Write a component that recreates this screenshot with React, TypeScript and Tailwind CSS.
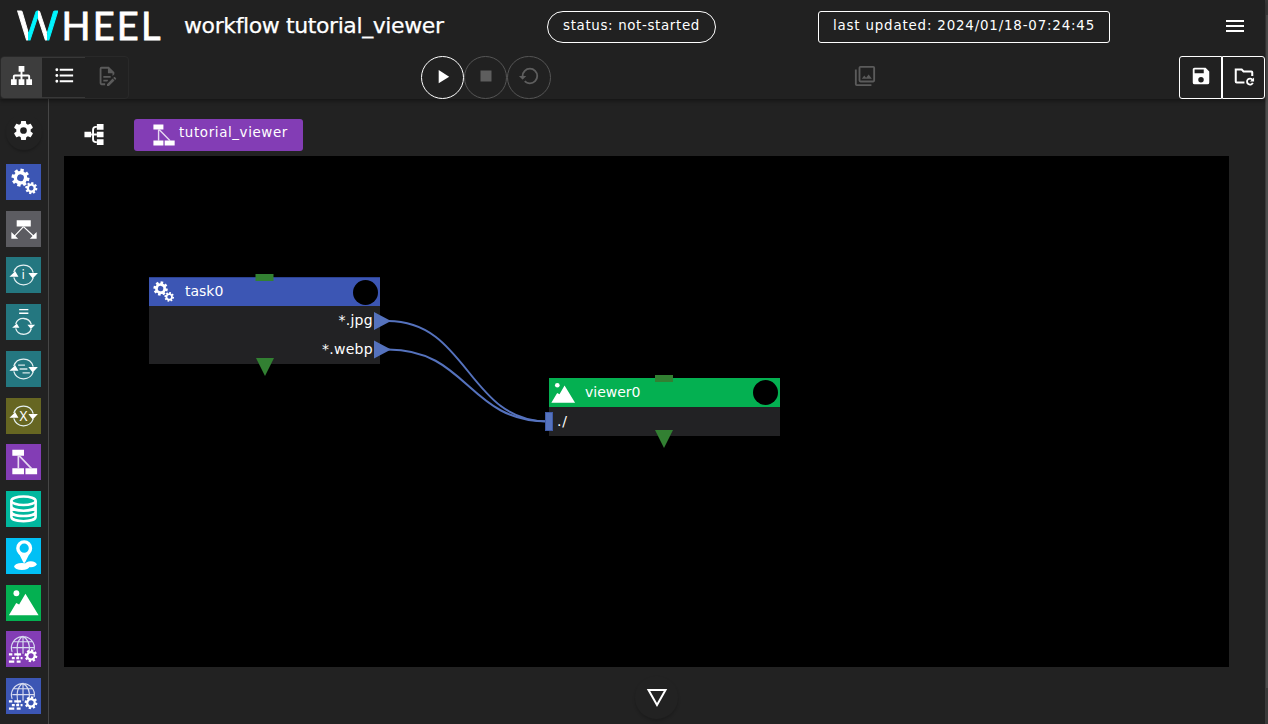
import React from "react";

const paths = {
  sitemap: "M9,2V8H11V11H5C3.89,11 3,11.89 3,13V16H1V22H7V16H5V13H11V16H9V22H15V16H13V13H19V16H17V22H23V16H21V13C21,11.89 20.11,11 19,11H13V8H15V2H9Z",
  list: "M7,5H21V7H7V5M7,13V11H21V13H7M4,4.5A1.5,1.5 0 0,1 5.5,6A1.5,1.5 0 0,1 4,7.5A1.5,1.5 0 0,1 2.5,6A1.5,1.5 0 0,1 4,4.5M4,10.5A1.5,1.5 0 0,1 5.5,12A1.5,1.5 0 0,1 4,13.5A1.5,1.5 0 0,1 2.5,12A1.5,1.5 0 0,1 4,10.5M7,19V17H21V19H7M4,16.5A1.5,1.5 0 0,1 5.5,18A1.5,1.5 0 0,1 4,19.5A1.5,1.5 0 0,1 2.5,18A1.5,1.5 0 0,1 4,16.5Z",
  edit: "M8,12H16V14H8V12M10,20H6V4H13V9H18V12.1L20,10.1V8L14,2H6A2,2 0 0,0 4,4V20A2,2 0 0,0 6,22H10V20M8,18H12.1L13,17.1V16H8V18M20.2,13C20.3,13 20.5,13.1 20.6,13.2L21.9,14.5C22.1,14.7 22.1,15.1 21.9,15.3L20.9,16.3L18.8,14.2L19.8,13.2C19.9,13.1 20,13 20.2,13M20.2,16.9L14.1,23H12V20.9L18.1,14.8L20.2,16.9Z",
  play: "M8,5.14V19.14L19,12.14L8,5.14Z",
  stop: "M18,18H6V6H18V18Z",
  restore: "M13,3A9,9 0 0,0 4,12H1L4.89,15.89L4.96,16.03L9,12H6A7,7 0 0,1 13,5A7,7 0 0,1 20,12A7,7 0 0,1 13,19C11.07,19 9.32,18.21 8.06,16.94L6.64,18.36C8.27,20 10.5,21 13,21A9,9 0 0,0 22,12A9,9 0 0,0 13,3Z",
  images: "M21,17H7V3H21M21,1H7A2,2 0 0,0 5,3V17A2,2 0 0,0 7,19H21A2,2 0 0,0 23,17V3A2,2 0 0,0 21,1M3,5H1V21A2,2 0 0,0 3,23H19V21H3M15.96,10.29L13.21,13.83L11.25,11.47L8.5,15H19.5L15.96,10.29Z",
  menu: "M3,6H21V8H3V6M3,11H21V13H3V11M3,16H21V18H3V16Z",
  save: "M15,9H5V5H15M12,19A3,3 0 0,1 9,16A3,3 0 0,1 12,13A3,3 0 0,1 15,16A3,3 0 0,1 12,19M17,3H5C3.89,3 3,3.9 3,5V19A2,2 0 0,0 5,21H19A2,2 0 0,0 21,19V7L17,3Z",
  cog: "M12,15.5A3.5,3.5 0 0,1 8.5,12A3.5,3.5 0 0,1 12,8.5A3.5,3.5 0 0,1 15.5,12A3.5,3.5 0 0,1 12,15.5M19.43,12.97C19.47,12.65 19.5,12.33 19.5,12C19.5,11.67 19.47,11.34 19.43,11L21.54,9.37C21.73,9.22 21.78,8.95 21.66,8.73L19.66,5.27C19.54,5.05 19.27,4.96 19.05,5.05L16.56,6.05C16.04,5.66 15.5,5.32 14.87,5.07L14.5,2.42C14.46,2.18 14.25,2 14,2H10C9.75,2 9.54,2.18 9.5,2.42L9.13,5.07C8.5,5.32 7.96,5.66 7.44,6.05L4.95,5.05C4.73,4.96 4.46,5.05 4.34,5.27L2.34,8.73C2.21,8.95 2.27,9.22 2.46,9.37L4.57,11C4.53,11.34 4.5,11.67 4.5,12C4.5,12.33 4.53,12.65 4.57,12.97L2.46,14.63C2.27,14.78 2.21,15.05 2.34,15.27L4.34,18.73C4.46,18.95 4.73,19.03 4.95,18.95L7.44,17.94C7.96,18.34 8.5,18.68 9.13,18.93L9.5,21.58C9.54,21.82 9.75,22 10,22H14C14.25,22 14.46,21.82 14.5,21.58L14.87,18.93C15.5,18.67 16.04,18.34 16.56,17.94L19.05,18.95C19.27,19.03 19.54,18.95 19.66,18.73L21.66,15.27C21.78,15.05 21.73,14.78 21.54,14.63L19.43,12.97Z",
};

function Icon({ name, className = "size-6" }: { name: keyof typeof paths; className?: string }) {
  return (
    <svg viewBox="0 0 24 24" className={className} fill="currentColor">
      <path d={paths[name]} />
    </svg>
  );
}

function FolderRefresh() {
  return (
    <svg viewBox="0 0 24 24" className="size-[22px]" fill="none" stroke="currentColor" strokeWidth="2.200">
      <path d="M12.500 19H4a1 1 0 0 1-1-1V5h6.500l2 2H20a1 1 0 0 1 1 1v4" />
      <path d="M21.300 16.200A3.300 3.300 0 1 0 21.600 19.500" strokeWidth="2" />
      <path d="M23 13.500V18h-4.500z" fill="currentColor" stroke="none" />
    </svg>
  );
}

function Gear({ cx, cy, r, hole }: { cx: number; cy: number; r: number; hole: number }) {
  const inner = r * 0.76;
  return (
    <g transform={`translate(${cx} ${cy}) rotate(12)`}>
      <circle r={(inner + hole) / 2} fill="none" stroke="#fff" strokeWidth={inner - hole} />
      {[0, 45, 90, 135, 180, 225, 270, 315].map((a) => (
        <rect key={a} x={-r * 0.19} y={-r} width={r * 0.38} height={r * 0.36} fill="#fff" transform={`rotate(${a})`} />
      ))}
    </g>
  );
}

function Cycle({ cy = 18, r = 10.3 }: { cy?: number; r?: number }) {
  const k = r / 10.3;
  return (
    <g transform={`translate(18 ${cy}) scale(${k})`} stroke="#e4f0f1" strokeWidth={1.3 / k} fill="none">
      <path d="M-10 -3A10.500 10.500 0 0 1 10 -2.500" />
      <path d="M10 3A10.500 10.500 0 0 1 -10 2.500" />
      <path d="M-14.500 1.800h9.300L-8.500 -3.800zM14.800 -2h-9.800L9.500 3.500z" fill="#fff" stroke="none" />
    </g>
  );
}

type Kind = "task" | "ps" | "for" | "while" | "foreach" | "if" | "workflow" | "storage" | "source" | "viewer" | "remote";

function Glyph({ kind, className }: { kind: Kind; className: string }) {
  return (
    <svg viewBox="0 0 36 36" className={className}>
      {kind === "task" && (
        <>
          <Gear cx={14.9} cy={13.6} r={9.2} hole={3.5} />
          <Gear cx={26} cy={24.3} r={6.2} hole={2.4} />
        </>
      )}
      {kind === "ps" && (
        <g fill="#fff">
          <path d="M11 9h14.500v6.500H11zM5.500 28v-7l7 7zM31.500 28v-7l-7 7z" />
          <path d="M18 15.500 8 26M18 15.500 29 26" stroke="#fff" strokeWidth="1.200" />
        </g>
      )}
      {kind === "for" && (
        <>
          <Cycle />
          <text x="17.800" y="22.500" textAnchor="middle" fontSize="12.500" fill="#fff" fontFamily="DejaVu Sans, sans-serif">i</text>
        </>
      )}
      {kind === "while" && (
        <>
          <Cycle cy={22.5} r={8.3} />
          <path d="M13.500 5.200h9.500M13.500 9h9.500" stroke="#fff" strokeWidth="1.300" />
        </>
      )}
      {kind === "foreach" && (
        <>
          <Cycle />
          <path d="M12.500 14h7M14 18h8M17 22h7.500" stroke="#d5e8e9" strokeWidth="1.500" />
        </>
      )}
      {kind === "if" && (
        <>
          <Cycle />
          <text x="18" y="23" textAnchor="middle" fontSize="14" fill="#fff" fontFamily="Noto Sans, sans-serif">X</text>
        </>
      )}
      {kind === "workflow" && (
        <g fill="#fff">
          <path d="M6.500 5.500h12v6h-12zM6.500 24.500h12v6h-12zM20 24.500h12v6H20z" />
          <path d="M12.700 11v14M13 11l13.500 14" stroke="#e6d8f0" strokeWidth="1.700" />
        </g>
      )}
      {kind === "storage" && (
        <g fill="none" stroke="#fff" strokeWidth="2.600">
          <ellipse cx="18" cy="9.500" rx="12.500" ry="4.400" />
          <path d="M5.500 9.500V26c0 6 25 6 25 0V9.500M5.500 15.200c0 6 25 6 25 0M5.500 20.700c0 6 25 6 25 0" />
        </g>
      )}
      {kind === "source" && (
        <g fill="#fff">
          <circle cx="18.700" cy="10" r="6.500" fill="none" stroke="#fff" strokeWidth="3.500" />
          <path d="M13.500 16h10.500l-4.500 9h-1.500z" />
          <ellipse cx="16.300" cy="28.700" rx="7.900" ry="3.600" />
          <ellipse cx="25.500" cy="26.500" rx="6" ry="3" />
        </g>
      )}
      {kind === "viewer" && (
        <g fill="#fff">
          <circle cx="10.700" cy="8" r="3" />
          <path d="M3 30.500 10.500 18l3 1.500 6.500-11L33.500 30.500z" />
        </g>
      )}
      {kind === "remote" && (
        <>
          <g fill="none" stroke="#d8dcf0" strokeWidth="1.200">
            <path d="M6.300 21A11.800 11.800 0 1 1 29 19M12.500 26Q9 10 17.500 5Q25 9 24 20M17.500 5v18M6.500 16.500h22.500M8.500 10.500h18.500" />
          </g>
          <path d="M3 23.500h3.500m2 0h7M6 27.300h3m1.500 0h3m1.500 0h2M3 31h5.500m2.500 0h4" stroke="#fff" strokeWidth="2.400" />
          <Gear cx={25.7} cy={25} r={6.5} hole={2.7} />
        </>
      )}
    </svg>
  );
}

function Palette() {
  return (
    <aside className="flex w-[49px] shrink-0 flex-col border-r border-[#464646] pl-1.5">
      <div className="flex h-[65px] items-start">
        <button className="mt-[15px] grid size-9 place-items-center rounded-full pb-1 pr-px shadow-[0_2px_2px_rgba(0,0,0,0.18)]">
          <Icon name="cog" className="size-[23px]" />
        </button>
      </div>
      <div className="flex flex-col gap-[10.74px]">
        <Glyph kind="task" className="h-9 w-[35px] bg-[#3c56b4]" />
        <Glyph kind="ps" className="h-9 w-[35px] bg-[#5c5c61]" />
        <Glyph kind="for" className="h-9 w-[35px] bg-[#247780]" />
        <Glyph kind="while" className="h-9 w-[35px] bg-[#247780]" />
        <Glyph kind="foreach" className="h-9 w-[35px] bg-[#247780]" />
        <Glyph kind="if" className="h-9 w-[35px] bg-[#666622]" />
        <Glyph kind="workflow" className="h-9 w-[35px] bg-[#833db5]" />
        <Glyph kind="storage" className="h-9 w-[35px] bg-[#01b79e]" />
        <Glyph kind="source" className="h-9 w-[35px] bg-[#01c0f5]" />
        <Glyph kind="viewer" className="h-9 w-[35px] bg-[#04b051]" />
        <Glyph kind="remote" className="h-9 w-[35px] bg-[#833db5]" />
        <Glyph kind="remote" className="h-9 w-[35px] bg-[#3c56b4]" />
      </div>
    </aside>
  );
}

function Header() {
  return (
    <header className="relative z-10 h-[99px] shrink-0 bg-[#212121] shadow-[0_2px_4px_rgba(0,0,0,0.4)]">
      <div className="flex h-14 items-start">
        <div className="ml-[17px] flex h-[50px] w-[167px] items-center font-['Lato',sans-serif] text-[38px] leading-none">
          <span className="mr-[3px] bg-[linear-gradient(90deg,#fff_0_27%,#00f5ff_27%_50%,#fff_50%_73%,#00f5ff_73%)] bg-clip-text text-[40px] text-transparent [-webkit-text-stroke:1px_transparent]">W</span>
          <span className="tracking-[2.2px] [-webkit-text-stroke:0.8px_white]">HEEL</span>
        </div>
        <h1 className="w-[363px] whitespace-nowrap pt-[10px] text-[22px] leading-8 tracking-[-0.4px] [-webkit-text-stroke:0.25px_white]">workflow tutorial_viewer</h1>
        <div className="mt-[11px] flex h-8 w-[169px] items-center justify-center rounded-full border border-white pb-0.5 text-[13.4px] tracking-[0.65px]">
          status: not-started
        </div>
        <div className="ml-[102px] mt-[11px] flex h-8 w-[292px] items-center justify-center rounded-[3px] border border-white pb-0.5 text-[13.4px] tracking-[0.82px]">
          last updated: 2024/01/18-07:24:45
        </div>
        <button className="ml-[113px] mt-[14px]"><Icon name="menu" className="size-6" /></button>
      </div>
      <div className="flex h-[43px]">
        <div className="flex w-[421px]">
          <div className="flex h-[43px] w-[129px] overflow-hidden rounded border border-[#292929]">
            <div className="grid w-[41px] place-items-center bg-[#3d3d3d] pb-1"><Icon name="sitemap" className="size-[23px]" /></div>
            <div className="grid w-[43px] place-items-center border-y border-[#383838] pb-1 pl-px"><Icon name="list" className="size-[23px]" /></div>
            <div className="grid w-[43px] place-items-center pb-[3px] text-[#5b5b5b]"><Icon name="edit" className="size-[22px]" /></div>
          </div>
        </div>
        <div className="flex w-[433px]">
          <button className="grid size-[43px] place-items-center rounded-full border border-white pb-[3px]"><Icon name="play" className="size-[23px]" /></button>
          <button className="grid size-[43px] place-items-center rounded-full border border-[#555] pb-[3px] text-[#5e5e5e]"><Icon name="stop" className="size-[22px]" /></button>
          <button className="grid h-[43px] w-11 place-items-center rounded-full border border-[#555] pb-[3px] text-[#5e5e5e]"><Icon name="restore" className="size-[22px]" /></button>
        </div>
        <div className="w-[325px] pt-[9px] text-[#5b5b5b]"><Icon name="images" className="size-[22px]" /></div>
        <div className="flex">
          <button className="grid h-[43px] w-[43px] place-items-center rounded-l-[3px] border border-white pb-1"><Icon name="save" className="size-[22px]" /></button>
          <button className="grid h-[43px] w-[43px] place-items-center rounded-r-[3px] border border-white pb-1"><FolderRefresh /></button>
        </div>
      </div>
    </header>
  );
}

function Canvas() {
  return (
    <div className="relative h-[511px] w-[1165px] bg-black text-[14px]">
      <section className="absolute left-[85px] top-[121px] flex h-[87px] w-[231px] flex-col bg-[#222224]">
        <div className="flex h-[29px] items-center border-t border-[#2c4294] bg-[#3c56b4]">
          <Glyph kind="task" className="size-7" />
          <span className="ml-2 flex-1 pb-px">task0</span>
          <span className="mr-0.5 size-[25px] rounded-full bg-black" />
        </div>
        <div className="pr-[7px] text-right leading-[29px] tracking-[0.3px]">*.jpg</div>
        <div className="pr-[7px] text-right leading-[28px] tracking-[0.3px]">*.webp</div>
      </section>
      <section className="absolute left-[485px] top-[222px] flex h-[58px] w-[231px] flex-col bg-[#222224]">
        <div className="flex h-[29px] items-center bg-[#04b051]">
          <Glyph kind="viewer" className="size-7" />
          <span className="ml-2 flex-1 pb-px">viewer0</span>
          <span className="mr-0.5 size-[25px] rounded-full bg-black" />
        </div>
        <div className="pl-2 leading-7 tracking-[0.8px]">./</div>
      </section>
      <svg className="absolute inset-0" width="1165" height="511" viewBox="64 156 1165 511">
        <g fill="none" stroke="#5572bd" strokeWidth="2">
          <path d="M388 321C468 321 468 421.500 548 421.500" />
          <path d="M388 349.500C468 349.500 468 421.500 548 421.500" />
        </g>
        <g fill="#5572bd">
          <path d="M374 312v18l17-9zM374 340.500v18l17-9z" />
          <rect x="545.500" y="412.500" width="7" height="18" stroke="#3f5aa5" />
        </g>
        <g fill="#328032">
          <path d="M255.500 274h18v7h-18zM655 375h18v7h-18zM256 358h18l-9 18zM655 430h18l-9 18z" />
        </g>
      </svg>
    </div>
  );
}

export default function App() {
  return (
    <div className="flex h-[724px] w-[1268px] overflow-hidden bg-[#222222] font-['DejaVu_Sans',sans-serif] text-white">
      <div className="flex w-[1265px] flex-col">
        <Header />
        <div className="flex min-h-0 flex-1">
          <Palette />
          <main className="flex flex-1 flex-col pl-[15px]">
            <div className="flex h-[57px] pt-5">
              <svg viewBox="0 0 20 22" className="ml-5 mt-[5px] h-[21px] w-5" fill="#fff">
                <path d="M0 8h7v6H0zM13 0h7v6h-7zM13 8h7v6h-7zM13 16h7v6h-7z" />
                <path d="M7 11h6M13 3h-1q-3 0-3 3v10q0 3 3 3h1" fill="none" stroke="#fff" strokeWidth="2" />
              </svg>
              <div className="ml-[30px] flex h-8 w-[169px] items-center rounded-[3px] bg-[#833db5] pl-[14px] text-[13.4px] tracking-[0.62px]">
                <Glyph kind="workflow" className="mr-px size-[30px] shrink-0" />
                <span className="whitespace-nowrap pb-[3px]">tutorial_viewer</span>
              </div>
            </div>
            <Canvas />
            <div className="flex justify-center pr-4">
              <button className="mt-[9px] grid h-[43px] w-[43px] place-items-center rounded-full shadow-[0_2px_3px_rgba(0,0,0,0.2)]">
                <svg width="22" height="20" viewBox="0 0 22 20" fill="none" stroke="#fff" strokeWidth="2">
                  <path d="M2.500 2h17L11 17z" />
                </svg>
              </button>
            </div>
          </main>
        </div>
      </div>
      <div className="w-[3px] bg-[#3a3a3a] pt-[15px]"><div className="ml-px h-[673px] bg-[#4d4d4d]" /></div>
    </div>
  );
}
